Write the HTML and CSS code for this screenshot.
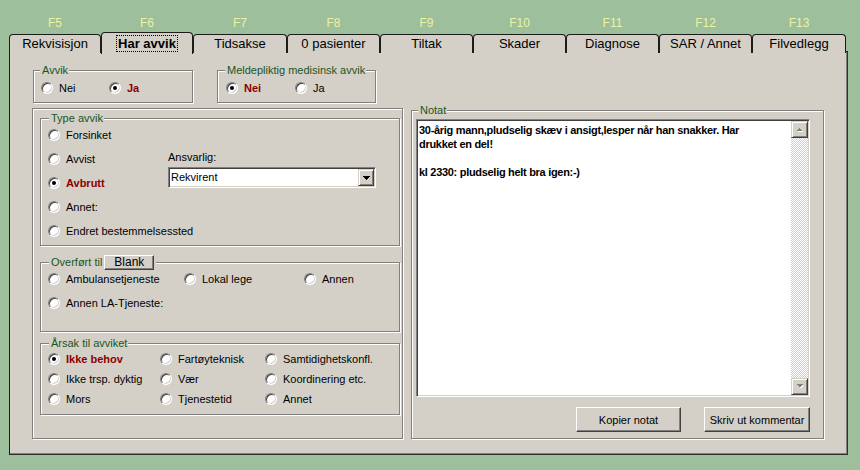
FILE: index.html
```html
<!DOCTYPE html>
<html lang="no">
<head>
<meta charset="utf-8">
<title>Har avvik</title>
<link rel="stylesheet" href="styles.css">
</head>
<body>
<div class="fkeys">
  <span>F5</span><span>F6</span><span>F7</span><span>F8</span><span>F9</span><span>F10</span><span>F11</span><span>F12</span><span>F13</span>
</div>
<div class="tabs">
  <div class="tab">Rekvisisjon</div>
  <div class="tab active"><span class="focus">Har avvik</span></div>
  <div class="tab">Tidsakse</div>
  <div class="tab">0 pasienter</div>
  <div class="tab">Tiltak</div>
  <div class="tab">Skader</div>
  <div class="tab">Diagnose</div>
  <div class="tab">SAR / Annet</div>
  <div class="tab">Filvedlegg</div>
</div>
<div class="panel">
  <div class="leftcol">
    <div class="toprow">
      <div class="group g-avvik">
        <span class="cap">Avvik</span>
        <div class="opts two-a">
          <div class="opt"><span class="radio"></span>Nei</div>
          <div class="opt sel"><span class="radio on"></span>Ja</div>
        </div>
      </div>
      <div class="group g-meld">
        <span class="cap">Meldepliktig medisinsk avvik</span>
        <div class="opts two-b">
          <div class="opt sel"><span class="radio on"></span>Nei</div>
          <div class="opt"><span class="radio"></span>Ja</div>
        </div>
      </div>
    </div>
    <div class="group big">
      <div class="group g-type">
        <span class="cap inner">Type avvik</span>
        <div class="typegrid">
          <div class="opt r1"><span class="radio"></span>Forsinket</div>
          <div class="opt r2"><span class="radio"></span>Avvist</div>
          <div class="opt sel r3"><span class="radio on"></span>Avbrutt</div>
          <div class="opt r4"><span class="radio"></span>Annet:</div>
          <div class="opt r5"><span class="radio"></span>Endret bestemmelsessted</div>
          <div class="ansvarlig">
            <div class="anslabel">Ansvarlig:</div>
            <div class="combo">
              <span class="combotext">Rekvirent</span>
              <span class="combobtn raised">
                <svg width="7" height="4" viewBox="0 0 7 4" shape-rendering="crispEdges"><polygon points="0,0 7,0 3.5,4" fill="#000"/></svg>
              </span>
            </div>
          </div>
        </div>
      </div>
      <div class="group g-over">
        <div class="cap inner capbtn">
          <span>Overført til</span>
          <span class="btn blank">Blank</span>
        </div>
        <div class="overgrid">
          <div class="opt"><span class="radio"></span>Ambulansetjeneste</div>
          <div class="opt"><span class="radio"></span>Lokal lege</div>
          <div class="opt"><span class="radio"></span>Annen</div>
          <div class="opt"><span class="radio"></span>Annen LA-Tjeneste:</div>
        </div>
      </div>
      <div class="group g-arsak">
        <span class="cap inner">Årsak til avviket</span>
        <div class="arsakgrid">
          <div class="opt sel"><span class="radio on"></span>Ikke behov</div>
          <div class="opt"><span class="radio"></span>Fartøyteknisk</div>
          <div class="opt"><span class="radio"></span>Samtidighetskonfl.</div>
          <div class="opt"><span class="radio"></span>Ikke trsp. dyktig</div>
          <div class="opt"><span class="radio"></span>Vær</div>
          <div class="opt"><span class="radio"></span>Koordinering etc.</div>
          <div class="opt"><span class="radio"></span>Mors</div>
          <div class="opt"><span class="radio"></span>Tjenestetid</div>
          <div class="opt"><span class="radio"></span>Annet</div>
        </div>
      </div>
    </div>
  </div>
  <div class="group g-notat">
    <span class="cap">Notat</span>
    <div class="note">
      <div class="notetext">30-årig mann,pludselig skæv i ansigt,lesper når han snakker. Har<br>drukket en del!<br><br>kl 2330: pludselig helt bra igen:-)</div>
      <div class="sb">
        <span class="sbbtn raised">
          <svg width="7" height="5" viewBox="0 0 7 5" shape-rendering="crispEdges"><polygon points="4.5,2 8,5 1,5" fill="#fff"/><polygon points="3.5,1 7,4 0,4" fill="#808080"/></svg>
        </span>
        <span class="sbtrack"></span>
        <span class="sbbtn raised">
          <svg width="7" height="5" viewBox="0 0 7 5" shape-rendering="crispEdges"><polygon points="1,1 8,1 4.5,4.5" fill="#fff"/><polygon points="0,0 7,0 3.5,3.5" fill="#808080"/></svg>
        </span>
      </div>
    </div>
    <div class="btnrow">
      <span class="btn cmd w105">Kopier notat</span>
      <span class="btn cmd w106">Skriv ut kommentar</span>
    </div>
  </div>
</div>
</body>
</html>
```

FILE: styles.css
```css
* { box-sizing: border-box; }

body {
  margin: 0;
  width: 860px;
  height: 470px;
  overflow: hidden;
  background: #9ebf9c;
  font-family: "Liberation Sans", Arial, sans-serif;
  font-size: 11px;
  color: #000;
}

/* function keys + tabs */
.fkeys, .tabs {
  display: grid;
  grid-template-columns: 92px 92px 94px 93px 93px 93px 93px 93px 94px;
  margin-left: 9px;
}
.fkeys {
  height: 32px;
  padding-top: 16px;
  line-height: 14px;
  font-size: 12px;
  color: #e9f3a4;
  text-align: center;
}
.tabs {
  height: 19px;
  align-items: end;
}
.tab {
  height: 19px;
  border: 1px solid #1c1c1c;
  border-bottom: 0;
  border-radius: 4px 4px 0 0;
  background: #d4d0c8;
  font-size: 13px;
  line-height: 17px;
  text-align: center;
  white-space: nowrap;
}
.tab.active {
  height: 22px;
  margin-bottom: -1px;
  padding-top: 2px;
  position: relative;
  z-index: 2;
  font-weight: bold;
}
.focus {
  outline: 1px dotted #000;
  outline-offset: 0;
  padding: 0 1px;
}

/* main panel */
.panel {
  margin-left: 9px;
  width: 839px;
  height: 404px;
  background: #d4d0c8;
  border: 1px solid #1c1c1c;
  border-right-color: #303030;
  border-bottom-color: #303030;
  box-shadow: inset -1px -1px 0 #808080;
  display: grid;
  grid-template-columns: 371px 413px;
  column-gap: 8px;
  padding: 0 0 15px 22px;
  align-items: end;
}
.leftcol {
  padding-top: 18px;
}
.toprow {
  display: flex;
  height: 33px;
}

/* group boxes */
.group {
  position: relative;
  border: 1px solid #808080;
  box-shadow: inset 1px 1px 0 #fff, 1px 1px 0 #fff;
}
.cap {
  position: absolute;
  top: -7px;
  left: 6px;
  padding: 0 1px 0 2px;
  line-height: 13px;
  background: #d4d0c8;
  color: #1a561a;
  white-space: nowrap;
}
.cap.inner { left: 8px; }

.g-avvik { width: 160px; margin-left: 1px; }
.g-meld { width: 159px; margin-left: 24px; }
.g-meld .cap { left: 7px; }

.opts {
  display: grid;
  padding-top: 7px;
}
.two-a { grid-template-columns: 68px auto; padding-left: 7px; }
.two-b { grid-template-columns: 69px auto; padding-left: 8px; }

.big {
  width: 371px;
  height: 331px;
  margin-top: 5px;
  padding: 9px 0 0 7px;
}

.g-type { width: 360px; height: 128px; }
.typegrid {
  display: grid;
  grid-template-columns: 120px auto;
  grid-template-rows: repeat(5, 24px);
  padding: 4px 0 0 7px;
}
.typegrid .opt { height: 24px; grid-column: 1; }
.ansvarlig {
  grid-column: 2;
  grid-row: 2 / span 2;
  padding-top: 4px;
}
.anslabel { line-height: 13px; }
.combo {
  margin-top: 3px;
  width: 208px;
  height: 21px;
  display: flex;
  align-items: stretch;
  background: #fff;
  border: 1px solid;
  border-color: #808080 #fff #fff #808080;
  box-shadow: inset 1px 1px 0 #404040, inset -1px -1px 0 #d4d0c8;
}
.combotext {
  flex: 1;
  padding: 2px 0 0 2px;
  line-height: 15px;
}
.combobtn {
  width: 16px;
  margin: 1px 1px 1px 0;
  display: flex;
  align-items: center;
  justify-content: center;
}

.g-over { width: 360px; height: 70px; margin-top: 16px; }
.capbtn {
  top: -8px;
  height: 15px;
  display: flex;
  align-items: center;
  padding-right: 2px;
}
.overgrid {
  display: grid;
  grid-template-columns: 136px 120px auto;
  grid-template-rows: 24px 24px;
  padding: 4px 0 0 7px;
}
.overgrid .opt { height: 24px; }

.g-arsak { width: 360px; height: 72px; margin-top: 11px; }
.arsakgrid {
  display: grid;
  grid-template-columns: 112px 105px auto;
  grid-template-rows: repeat(3, 20px);
  padding: 5px 0 0 7px;
}

/* radio options */
.opt {
  display: flex;
  align-items: center;
  height: 20px;
  white-space: nowrap;
}
.radio {
  flex: none;
  width: 12px;
  height: 12px;
  margin-right: 6px;
  border-radius: 50%;
  background: #fff;
  border: 1px solid;
  border-color: #808080 #fff #fff #808080;
  box-shadow: inset 1px 1px 0 #404040, inset -1px -1px 0 #d4d0c8;
  display: flex;
  align-items: center;
  justify-content: center;
}
.radio.on::after {
  content: "";
  width: 4px;
  height: 4px;
  border-radius: 50%;
  background: #000;
}
.sel {
  font-weight: bold;
  color: #8b0000;
}

/* buttons */
.raised {
  background: #d4d0c8;
  border: 1px solid;
  border-color: #d4d0c8 #404040 #404040 #d4d0c8;
  box-shadow: inset 1px 1px 0 #fff, inset -1px -1px 0 #808080;
}
.btn {
  display: flex;
  align-items: center;
  justify-content: center;
  background: #d4d0c8;
  border: 1px solid;
  border-color: #fff #404040 #404040 #fff;
  box-shadow: inset -1px -1px 0 #808080;
  color: #000;
  white-space: nowrap;
}
.blank {
  width: 50px;
  height: 15px;
  margin-left: 2px;
  font-size: 12px;
}

/* notat */
.g-notat {
  height: 329px;
  padding: 8px 13px 0 4px;
}
.note {
  height: 278px;
  display: flex;
  background: #fff;
  border: 1px solid;
  border-color: #808080 #fff #fff #808080;
  box-shadow: inset 1px 1px 0 #404040, inset -1px -1px 0 #d4d0c8;
  padding: 1px;
}
.notetext {
  flex: 1;
  padding: 2px 0 0 1px;
  font-weight: bold;
  line-height: 14px;
  letter-spacing: -0.3px;
  white-space: nowrap;
}
.sb {
  width: 17px;
  display: flex;
  flex-direction: column;
}
.sbbtn {
  height: 17px;
  display: flex;
  align-items: center;
  justify-content: center;
}
.sbtrack {
  flex: 1;
  background: repeating-conic-gradient(#fff 0 25%, #d4d0c8 0 50%) 0 0 / 2px 2px;
}
.btnrow {
  display: flex;
  justify-content: flex-end;
  gap: 23px;
  margin-top: 10px;
}
.cmd { height: 25px; }
.w105 { width: 105px; }
.w106 { width: 106px; }
```
